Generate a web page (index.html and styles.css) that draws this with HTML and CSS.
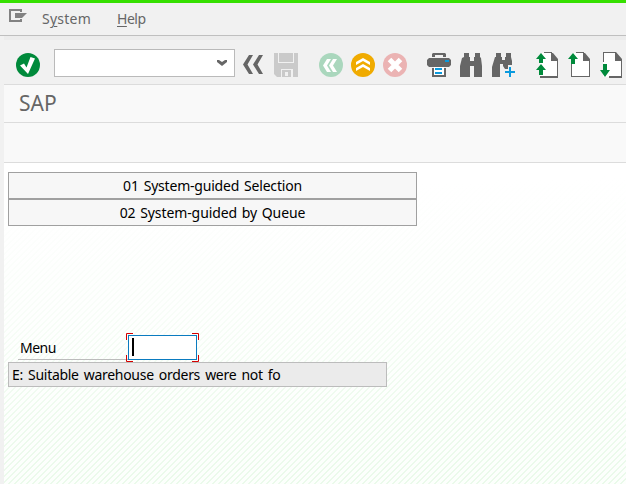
FILE: index.html
```html
<!DOCTYPE html>
<html lang="en">
<head>
<meta charset="utf-8">
<title>SAP</title>
<link rel="stylesheet" href="styles.css">
</head>
<body>
<nav class="menubar">
  <svg class="menu-icon" width="18" height="13" viewBox="0 0 18 13"><path d="M12 1H1v11h11M12 0v3M12 10v3" fill="none" stroke="#828282" stroke-width="2"/><path d="M6 4h12l-5 5H6z" fill="#828282"/></svg>
  <span class="menu-system">S<u>y</u>stem</span>
  <span class="menu-help"><u>H</u>elp</span>
</nav>
<div class="window">
  <div class="toolbar">
    <svg class="icon" viewBox="0 0 24 24"><circle cx="12" cy="12" r="12" fill="#008a3b"/><path d="M4 12.500l4-2 2.500 4L14.500 4l4.500 1.500-7 15.500z" fill="#fff"/></svg>
    <div class="combo"><svg width="10" height="6" viewBox="0 0 10 6"><path d="M0 0h2l3 2 3-2h2v2L5 6 0 2z" fill="#666"/></svg></div>
    <svg class="icon back" viewBox="0 0 24 24"><path d="M6 2h4L4.500 11.500 10 21H6L0 11.500zM16 2h4l-5.500 9.500L20 21h-4l-6-9.500z" fill="#666"/></svg>
    <svg class="icon save" viewBox="0 0 24 24"><path d="M0 0h4v10h16V0h4v24h-5v-8H7v8H3l-3-3z" fill="#cacaca"/><path d="M5 0h14v9H5zM8 17h9v7H8z" fill="#cacaca"/><path d="M11 19h3v4h-3z" fill="#f1f1f1"/></svg>
    <svg class="icon previous" viewBox="0 0 24 24"><circle cx="12" cy="12" r="12" fill="#aad7bd"/><path d="M8 6h4l-4 6.500 4 6.500H8l-4-6.500zM14 6h4l-4 6.500 4 6.500h-4l-4-6.500z" fill="#fff"/></svg>
    <svg class="icon exit" viewBox="0 0 24 24"><circle cx="12" cy="12" r="12" fill="#f0ab00"/><path d="M5 12V9l7-4 7 4v3l-7-4zM5 18v-3l7-4 7 4v3l-7-4z" fill="#fff"/></svg>
    <svg class="icon cancel" viewBox="0 0 24 24"><circle cx="12" cy="12" r="12" fill="#ebb3b3"/><path d="M6.500 6.500l11 11M17.500 6.500l-11 11" stroke="#fff" stroke-width="5"/></svg>
    <svg class="icon print" viewBox="0 0 24 24"><path d="M5 4V1l1-1h12l1 1v3h-3V2H8v2zM2 5h20l2 2v5l-2 2H2l-2-2V7zM5 15h2v7h10v-7h2v9H5z" fill="#666"/><path d="M7 14h10v8H7z" fill="#fff"/><path d="M18 7h4v2h-4zM8 15h7v2H8zM8 19h7v2H8z" fill="#0a9ade"/></svg>
    <svg class="icon find" viewBox="0 0 24 24"><path d="M5 0h5v4h1v4h4V4h1V0h5v4l1 1 1 8v11h-8V13h-4v11H1V13l2-8 2-1z" fill="#666"/></svg>
    <svg class="icon findnext" viewBox="0 0 24 24"><path d="M5 0h5v4h1v3h3V4h1V0h5v4l1 4v4h-4v4h-3l-2-3v-2H9v13H1V14l3-10h1z" fill="#666"/><path d="M14 18h4v-4h2v4h4v2h-4v4h-2v-4h-4z" fill="#0a9ade"/></svg>
    <svg class="page first" viewBox="0 0 24 26"><path d="M6 1h11l4 6v17H4V9" fill="#fff"/><path d="M8 0h8v1H8zM15 1h2l5 6v19H4v-2h17V9h-6z" fill="#666"/><path d="M5 1l5 6H7v4H3V7H0zM5 12l5 6H7v5H3v-5H0z" fill="#008a3b"/></svg>
    <svg class="page prior" viewBox="0 0 24 26"><path d="M4 1h12l5 6v17H4z" fill="#fff"/><path d="M8 0h8v1H8zM15 1h2l5 6v18H3V10h1v14h17V9h-6z" fill="#666"/><path d="M5 1l5 6H7v5H3V7H0z" fill="#008a3b"/></svg>
    <svg class="page next" viewBox="0 0 24 26"><path d="M3 1h12l6 6v18H3z" fill="#fff"/><path d="M3 0h13l6 7v19H9v-2h12V9h-6V1H4v9H3z" fill="#666"/><path d="M3 12h4v6h3l-5 7-5-7h3z" fill="#008a3b"/></svg>
  </div>
  <header class="title">SAP</header>
  <div class="appbar"></div>
  <main class="screen">
    <div class="choices">
      <button class="choice"><span class="label-one">01 System-guided Selection</span></button>
      <button class="choice"><span class="label-two">02 System-guided by Queue</span></button>
    </div>
    <div class="menu-row">
      <label class="menu-label">Menu</label>
      <div class="field"><span class="caret"></span>
        <svg class="corners" width="73" height="29" viewBox="0 0 73 29"><path d="M.5 7V.5H7M66 .5h6.500V7M.5 22v6.500H7M66 28.500h6.500V22" fill="none" stroke="#d40000"/></svg>
      </div>
    </div>
    <div class="message"><span>E: Suitable warehouse orders were not fo</span></div>
  </main>
</div>
</body>
</html>
```
FILE: styles.css
```css
* { box-sizing: border-box; }
body {
  margin: 0;
  width: 626px;
  height: 484px;
  overflow: hidden;
  background: #f1f1f1;
  font: 14px/18px "Noto Sans", sans-serif;
  color: #000;
}
.menubar {
  display: flex;
  height: 36px;
  padding: 6px 0 0 9px;
  border-top: 3px solid #36e000;
  border-bottom: 1px solid #bfbfbf;
  color: #666;
}
.menubar span { margin-top: 1px; white-space: nowrap; }
.menubar u { text-underline-offset: 2px; }
.menu-icon { flex: none; }
.menu-system { width: 75px; margin-left: 15px; letter-spacing: .25px; }
.menu-help { letter-spacing: -.5px; }
.window {
  height: 448px;
  margin-left: 4px;
  border-top: 4px solid #ececec;
}
.toolbar {
  display: flex;
  align-items: flex-start;
  height: 45px;
  padding: 13px 0 0 12px;
  border-bottom: 1px solid #dcdcdc;
}
.icon { flex: none; width: 24px; height: 24px; }
.combo {
  flex: none;
  display: flex;
  align-items: center;
  justify-content: flex-end;
  width: 181px;
  height: 28px;
  margin: -4px 0 0 14px;
  padding-right: 7px;
  border: 1px solid #bababa;
  background: #fff;
}
.back { margin-left: 8px; }
.save { margin-left: 7px; }
.previous { margin-left: 21px; }
.exit, .cancel { margin-left: 8px; }
.print { margin-left: 20px; }
.find { margin-left: 8px; }
.findnext { margin-left: 8px; }
.page { flex: none; width: 24px; height: 26px; margin-top: -1px; }
.first { margin-left: 21px; }
.prior, .next { margin-left: 8px; }
.title {
  height: 38px;
  padding-left: 15px;
  border-bottom: 1px solid #dcdcdc;
  background: #f9f9f9;
  color: #666;
  font-size: 21px;
  line-height: 37px;
}
.appbar { height: 40px; border-bottom: 1px solid #dcdcdc; background: #f9f9f9; }
.screen {
  height: 321px;
  padding: 9px 0 0 4px;
  background:
    linear-gradient(178deg, #fff 10%, rgba(255,255,255,.7) 45%, rgba(255,255,255,.25) 75%, rgba(255,255,255,.1) 100%),
    repeating-linear-gradient(135deg, #e8f9e8 0 1.8px, #fcfffc 1.8px 4.243px);
}
.choices { width: 409px; }
.choice {
  display: block;
  width: 100%;
  height: 27px;
  padding: 0;
  border: 1px solid #a0a0a0;
  border-radius: 0;
  background: #f7f7f7;
  color: #000;
  font: inherit;
}
.label-one { letter-spacing: -.2px; word-spacing: 1.5px; }
.label-two { letter-spacing: -.1px; word-spacing: 1.2px; }
.menu-row { display: flex; margin: 109px 0 0 10px; height: 25px; }
.menu-label { width: 110px; padding: 4px 0 0 2px; border-bottom: 1px solid #bcbcbc; letter-spacing: -.5px; }
.field {
  position: relative;
  width: 69px;
  padding: 2px 0 0 3px;
  border: 1px solid #0a7bc0;
  background: #fff;
}
.caret { display: block; width: 2px; height: 18px; background: #000; }
.corners { position: absolute; left: -3px; top: -3px; }
.message {
  width: 379px;
  height: 25px;
  margin-top: 2px;
  padding: 3px 0 0 3px;
  border: 1px solid #bcbcbc;
  background: #ebebeb;
  letter-spacing: -.3px;
  word-spacing: 1.8px;
}
```
